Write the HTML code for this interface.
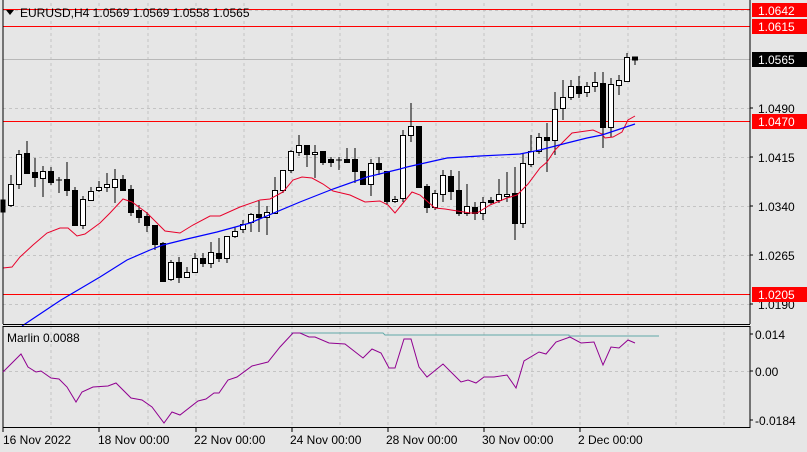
<!DOCTYPE html>
<html><head><meta charset="utf-8"><style>
html,body{margin:0;padding:0;background:#e6e6e6;}
svg{display:block;font-family:"Liberation Sans",sans-serif;}
</style></head><body>
<svg width="807" height="452" viewBox="0 0 807 452" xmlns="http://www.w3.org/2000/svg">
<rect width="807" height="452" fill="#e6e6e6"/>
<g stroke="#c4c4c4" stroke-width="1" stroke-dasharray="3,3">
<line x1="51" y1="3" x2="51" y2="324"/><line x1="99" y1="3" x2="99" y2="324"/><line x1="148" y1="3" x2="148" y2="324"/><line x1="196" y1="3" x2="196" y2="324"/><line x1="244" y1="3" x2="244" y2="324"/><line x1="292" y1="3" x2="292" y2="324"/><line x1="340" y1="3" x2="340" y2="324"/><line x1="388" y1="3" x2="388" y2="324"/><line x1="436" y1="3" x2="436" y2="324"/><line x1="484" y1="3" x2="484" y2="324"/><line x1="532" y1="3" x2="532" y2="324"/><line x1="580" y1="3" x2="580" y2="324"/><line x1="628" y1="3" x2="628" y2="324"/><line x1="676" y1="3" x2="676" y2="324"/><line x1="724" y1="3" x2="724" y2="324"/>
<line x1="3" y1="10.5" x2="750" y2="10.5"/><line x1="3" y1="108.5" x2="750" y2="108.5"/><line x1="3" y1="157.5" x2="750" y2="157.5"/><line x1="3" y1="206.5" x2="750" y2="206.5"/><line x1="3" y1="255.5" x2="750" y2="255.5"/><line x1="3" y1="304.5" x2="750" y2="304.5"/>
<line x1="51" y1="326" x2="51" y2="427"/><line x1="99" y1="326" x2="99" y2="427"/><line x1="148" y1="326" x2="148" y2="427"/><line x1="196" y1="326" x2="196" y2="427"/><line x1="244" y1="326" x2="244" y2="427"/><line x1="292" y1="326" x2="292" y2="427"/><line x1="340" y1="326" x2="340" y2="427"/><line x1="388" y1="326" x2="388" y2="427"/><line x1="436" y1="326" x2="436" y2="427"/><line x1="484" y1="326" x2="484" y2="427"/><line x1="532" y1="326" x2="532" y2="427"/><line x1="580" y1="326" x2="580" y2="427"/><line x1="628" y1="326" x2="628" y2="427"/><line x1="676" y1="326" x2="676" y2="427"/><line x1="724" y1="326" x2="724" y2="427"/>
<line x1="3" y1="371.5" x2="750" y2="371.5"/>
</g>
<line x1="3" y1="59.5" x2="750" y2="59.5" stroke="#b8b8b8"/>
<g stroke="#ff0000" stroke-width="1">
<line x1="3" y1="9.5" x2="750" y2="9.5"/><line x1="3" y1="26.5" x2="750" y2="26.5"/><line x1="3" y1="121.5" x2="750" y2="121.5"/><line x1="3" y1="294.5" x2="750" y2="294.5"/>
</g>
<g stroke="#000" stroke-width="1" shape-rendering="crispEdges">
<line x1="3" y1="175" x2="3" y2="212"/><rect x="1" y="200" width="4" height="12" fill="#000"/>
<line x1="11" y1="175" x2="11" y2="207"/><rect x="8.5" y="184.5" width="5" height="21" fill="#fff"/>
<line x1="19" y1="150" x2="19" y2="189"/><rect x="16.5" y="154.5" width="5" height="30" fill="#fff"/>
<line x1="27" y1="141" x2="27" y2="173"/><rect x="24.5" y="153.5" width="5" height="20" fill="#000"/>
<line x1="35" y1="158" x2="35" y2="187"/><rect x="32.5" y="172.5" width="5" height="5" fill="#000"/>
<line x1="43" y1="166" x2="43" y2="197"/><rect x="40.5" y="171.5" width="5" height="7" fill="#fff"/>
<line x1="51" y1="167" x2="51" y2="185"/><rect x="48.5" y="171.5" width="5" height="11" fill="#000"/>
<line x1="59" y1="177" x2="59" y2="193"/><line x1="56" y1="180" x2="62" y2="180"/>
<line x1="67" y1="162" x2="67" y2="196"/><rect x="64.5" y="179.5" width="5" height="11" fill="#000"/>
<line x1="75" y1="187" x2="75" y2="225"/><rect x="72.5" y="190.5" width="5" height="35" fill="#000"/>
<line x1="83" y1="196" x2="83" y2="229"/><rect x="80.5" y="199.5" width="5" height="26" fill="#fff"/>
<line x1="91" y1="187" x2="91" y2="200"/><rect x="88.5" y="191.5" width="5" height="9" fill="#fff"/>
<line x1="99" y1="181" x2="99" y2="192"/><rect x="96.5" y="187.5" width="5" height="3" fill="#fff"/>
<line x1="107" y1="173" x2="107" y2="192"/><rect x="104.5" y="184.5" width="5" height="3" fill="#fff"/>
<line x1="115" y1="169" x2="115" y2="203"/><rect x="112.5" y="179.5" width="5" height="8" fill="#fff"/>
<line x1="123" y1="175" x2="123" y2="190"/><rect x="120.5" y="179.5" width="5" height="11" fill="#000"/>
<line x1="131" y1="185" x2="131" y2="216"/><rect x="128.5" y="189.5" width="5" height="23" fill="#000"/>
<line x1="139" y1="205" x2="139" y2="223"/><rect x="136.5" y="210.5" width="5" height="7" fill="#000"/>
<line x1="147" y1="212" x2="147" y2="232"/><rect x="144.5" y="216.5" width="5" height="9" fill="#000"/>
<line x1="155" y1="225" x2="155" y2="250"/><rect x="152.5" y="225.5" width="5" height="19" fill="#000"/>
<line x1="163" y1="242" x2="163" y2="281"/><rect x="160.5" y="243.5" width="5" height="38" fill="#000"/>
<line x1="171" y1="260" x2="171" y2="281"/><rect x="168.5" y="262.5" width="5" height="17" fill="#fff"/>
<line x1="179" y1="257" x2="179" y2="283"/><rect x="176.5" y="262.5" width="5" height="15" fill="#000"/>
<line x1="187" y1="267" x2="187" y2="277"/><rect x="184.5" y="272.5" width="5" height="5" fill="#fff"/>
<line x1="195" y1="253" x2="195" y2="273"/><rect x="192.5" y="258.5" width="5" height="14" fill="#fff"/>
<line x1="203" y1="253" x2="203" y2="267"/><rect x="200.5" y="258.5" width="5" height="5" fill="#000"/>
<line x1="211" y1="242" x2="211" y2="268"/><rect x="208.5" y="252.5" width="5" height="11" fill="#fff"/>
<line x1="219" y1="238" x2="219" y2="262"/><rect x="216.5" y="253.5" width="5" height="5" fill="#000"/>
<line x1="227" y1="236" x2="227" y2="263"/><rect x="224.5" y="236.5" width="5" height="22" fill="#fff"/>
<line x1="235" y1="227" x2="235" y2="238"/><rect x="232.5" y="231.5" width="5" height="5" fill="#fff"/>
<line x1="243" y1="220" x2="243" y2="233"/><rect x="240.5" y="224.5" width="5" height="5" fill="#fff"/>
<line x1="251" y1="213" x2="251" y2="232"/><rect x="248.5" y="214.5" width="5" height="8" fill="#fff"/>
<line x1="259" y1="201" x2="259" y2="232"/><rect x="256.5" y="214.5" width="5" height="3" fill="#000"/>
<line x1="267" y1="206" x2="267" y2="235"/><rect x="264.5" y="212.5" width="5" height="5" fill="#fff"/>
<line x1="275" y1="177" x2="275" y2="213"/><rect x="272.5" y="190.5" width="5" height="23" fill="#fff"/>
<line x1="283" y1="170" x2="283" y2="193"/><rect x="280.5" y="170.5" width="5" height="20" fill="#fff"/>
<line x1="291" y1="150" x2="291" y2="173"/><rect x="288.5" y="151.5" width="5" height="19" fill="#fff"/>
<line x1="299" y1="135" x2="299" y2="156"/><rect x="296.5" y="145.5" width="5" height="7" fill="#fff"/>
<line x1="307" y1="145" x2="307" y2="167"/><rect x="304.5" y="145.5" width="5" height="9" fill="#000"/>
<line x1="315" y1="145" x2="315" y2="178"/><rect x="312.5" y="152.5" width="5" height="2" fill="#fff"/>
<line x1="323" y1="151" x2="323" y2="165"/><rect x="320.5" y="151.5" width="5" height="11" fill="#000"/>
<line x1="331" y1="157" x2="331" y2="167"/><rect x="328.5" y="159.5" width="5" height="3" fill="#000"/>
<line x1="339" y1="157" x2="339" y2="170"/><line x1="336" y1="160" x2="342" y2="160"/>
<line x1="347" y1="148" x2="347" y2="163"/><rect x="344.5" y="159.5" width="5" height="3" fill="#000"/>
<line x1="355" y1="148" x2="355" y2="183"/><rect x="352.5" y="159.5" width="5" height="12" fill="#000"/>
<line x1="363" y1="171" x2="363" y2="184"/><rect x="360.5" y="171.5" width="5" height="13" fill="#000"/>
<line x1="371" y1="159" x2="371" y2="196"/><rect x="368.5" y="163.5" width="5" height="21" fill="#fff"/>
<line x1="379" y1="157" x2="379" y2="175"/><rect x="376.5" y="163.5" width="5" height="6" fill="#000"/>
<line x1="387" y1="171" x2="387" y2="205"/><rect x="384.5" y="171.5" width="5" height="30" fill="#000"/>
<line x1="395" y1="196" x2="395" y2="203"/><rect x="392.5" y="199.5" width="5" height="2" fill="#fff"/>
<line x1="403" y1="130" x2="403" y2="202"/><rect x="400.5" y="135.5" width="5" height="63" fill="#fff"/>
<line x1="411" y1="103" x2="411" y2="142"/><rect x="408.5" y="126.5" width="5" height="9" fill="#fff"/>
<line x1="419" y1="126" x2="419" y2="188"/><rect x="416.5" y="126.5" width="5" height="61" fill="#000"/>
<line x1="427" y1="184" x2="427" y2="213"/><rect x="424.5" y="186.5" width="5" height="21" fill="#000"/>
<line x1="435" y1="190" x2="435" y2="210"/><rect x="432.5" y="193.5" width="5" height="14" fill="#fff"/>
<line x1="443" y1="170" x2="443" y2="202"/><rect x="440.5" y="175.5" width="5" height="19" fill="#fff"/>
<line x1="451" y1="170" x2="451" y2="200"/><rect x="448.5" y="176.5" width="5" height="15" fill="#000"/>
<line x1="459" y1="171" x2="459" y2="216"/><rect x="456.5" y="190.5" width="5" height="23" fill="#000"/>
<line x1="467" y1="184" x2="467" y2="216"/><rect x="464.5" y="206.5" width="5" height="7" fill="#fff"/>
<line x1="475" y1="202" x2="475" y2="220"/><rect x="472.5" y="207.5" width="5" height="6" fill="#000"/>
<line x1="483" y1="197" x2="483" y2="220"/><rect x="480.5" y="202.5" width="5" height="11" fill="#fff"/>
<line x1="491" y1="197" x2="491" y2="205"/><rect x="488.5" y="200.5" width="5" height="2" fill="#000"/>
<line x1="499" y1="179" x2="499" y2="203"/><rect x="496.5" y="194.5" width="5" height="6" fill="#fff"/>
<line x1="507" y1="172" x2="507" y2="202"/><rect x="504.5" y="194.5" width="5" height="2" fill="#fff"/>
<line x1="515" y1="167" x2="515" y2="240"/><rect x="512.5" y="193.5" width="5" height="30" fill="#000"/>
<line x1="523" y1="153" x2="523" y2="228"/><rect x="520.5" y="163.5" width="5" height="60" fill="#fff"/>
<line x1="531" y1="135" x2="531" y2="167"/><rect x="528.5" y="151.5" width="5" height="13" fill="#fff"/>
<line x1="539" y1="133" x2="539" y2="154"/><rect x="536.5" y="137.5" width="5" height="14" fill="#fff"/>
<line x1="547" y1="123" x2="547" y2="172"/><rect x="544.5" y="137.5" width="5" height="3" fill="#000"/>
<line x1="555" y1="92" x2="555" y2="155"/><rect x="552.5" y="109.5" width="5" height="31" fill="#fff"/>
<line x1="563" y1="80" x2="563" y2="120"/><rect x="560.5" y="97.5" width="5" height="11" fill="#fff"/>
<line x1="571" y1="80" x2="571" y2="100"/><rect x="568.5" y="86.5" width="5" height="11" fill="#fff"/>
<line x1="579" y1="76" x2="579" y2="98"/><rect x="576.5" y="86.5" width="5" height="7" fill="#000"/>
<line x1="587" y1="82" x2="587" y2="97"/><rect x="584.5" y="86.5" width="5" height="6" fill="#fff"/>
<line x1="595" y1="72" x2="595" y2="92"/><rect x="592.5" y="82.5" width="5" height="4" fill="#fff"/>
<line x1="603" y1="72" x2="603" y2="148"/><rect x="600.5" y="83.5" width="5" height="44" fill="#000"/>
<line x1="611" y1="78" x2="611" y2="137"/><rect x="608.5" y="84.5" width="5" height="43" fill="#fff"/>
<line x1="619" y1="75" x2="619" y2="95"/><rect x="616.5" y="80.5" width="5" height="5" fill="#fff"/>
<line x1="627" y1="53" x2="627" y2="81"/><rect x="624.5" y="57.5" width="5" height="24" fill="#fff"/>
<line x1="635" y1="57" x2="635" y2="65"/><rect x="632.5" y="57" width="5" height="3" fill="#000"/>
</g>
<polyline fill="none" stroke="#e8002a" stroke-width="1" points="3,268 12,267 20,257 33,245 47,233 60,228 68,228 77,236 85,234 100,223 110,213 123,199 132,202 147,213 157,223 165,231 180,233 193,225 210,216 220,216 240,207 260,200 270,199 283,192 293,180 302,177 312,178 323,184 333,191 350,195 365,202 380,201 388,205 395,213 412,192 420,195 435,208 445,209 470,213 477,213 490,205 507,198 517,195 528,184 540,168 547,162 555,150 562,143 572,133 593,130 602,134 605,138 613,137 622,132 628,120 635,116"/>
<polyline fill="none" stroke="#0000ff" stroke-width="1.2" points="22,326 25,324 61,300 78,290 100,277 127,260 150,250 163,245 187,239 217,232 250,223 300,202 333,189 367,177 400,169 407,167 447,158 480,156 520,154 540,150 567,143 587,138 602,135 620,129 635,124"/>
<!-- frames -->
<g fill="none" stroke="#000" stroke-width="1" shape-rendering="crispEdges">
<line x1="3" y1="0" x2="3" y2="324"/><line x1="750" y1="0" x2="750" y2="324"/><line x1="3" y1="324.5" x2="750" y2="324.5"/>
<rect x="3" y="326.5" width="747" height="101"/>
<line x1="3" y1="428" x2="3" y2="432"/><line x1="99" y1="428" x2="99" y2="432"/><line x1="196" y1="428" x2="196" y2="432"/><line x1="292" y1="428" x2="292" y2="432"/><line x1="388" y1="428" x2="388" y2="432"/><line x1="484" y1="428" x2="484" y2="432"/><line x1="580" y1="428" x2="580" y2="432"/>
<line x1="750" y1="108" x2="753" y2="108"/><line x1="750" y1="157" x2="753" y2="157"/><line x1="750" y1="206" x2="753" y2="206"/><line x1="750" y1="255" x2="753" y2="255"/><line x1="750" y1="304" x2="753" y2="304"/>
<line x1="750" y1="334" x2="753" y2="334"/><line x1="750" y1="371" x2="753" y2="371"/><line x1="750" y1="420" x2="753" y2="420"/>
</g>
<!-- indicator -->
<polyline fill="none" stroke="#60a8a8" stroke-width="1" points="291,333 383,333 385,335 569,335 569,336 659,336"/>
<polyline fill="none" stroke="#900090" stroke-width="1" points="3,372 21,354 28,367 36,372 41,371 51,378 59,379 67,387 76,402 82,392 93,387 108,386 116,383 131,398 142,400 152,407 164,423 172,412 180,415 198,401 206,399 214,393 219,393 228,380 237,377 252,366 268,362 280,347 293,333 300,333 309,337 315,337 329,343 345,344 363,358 372,349 381,353 389,368 395,368 404,339 411,339 419,367 427,377 443,364 461,382 468,380 476,383 484,377 494,377 507,375 516,388 524,361 539,352 546,354 556,342 570,337 581,343 594,342 603,365 611,347 619,348 628,340 635,343"/>
<text x="7" y="342" font-size="12" fill="#000">Marlin 0.0088</text>
<!-- header -->
<polygon points="6,10 14,10 10,15" fill="#000"/>
<text x="20" y="17" font-size="12" fill="#000">EURUSD,H4  1.0569 1.0569 1.0558 1.0565</text>
<!-- price labels -->
<g font-size="12" fill="#000">
<text x="758" y="113">1.0490</text><text x="758" y="162">1.0415</text><text x="758" y="211">1.0340</text><text x="758" y="260">1.0265</text><text x="758" y="309">1.0190</text>
<text x="755" y="339">0.014</text><text x="755" y="376">0.00</text><text x="755" y="425">-0.0184</text>
</g>
<rect x="752" y="3" width="55" height="14" fill="#ff0000"/><text x="758" y="15" font-size="12" fill="#fff">1.0642</text>
<rect x="752" y="19" width="55" height="15" fill="#ff0000"/><text x="758" y="31" font-size="12" fill="#fff">1.0615</text>
<rect x="752" y="52" width="55" height="15" fill="#000"/><text x="758" y="64" font-size="12" fill="#fff">1.0565</text>
<rect x="752" y="114" width="55" height="15" fill="#ff0000"/><text x="758" y="126" font-size="12" fill="#fff">1.0470</text>
<rect x="752" y="287" width="55" height="15" fill="#ff0000"/><text x="758" y="299" font-size="12" fill="#fff">1.0205</text>
<!-- time labels -->
<g font-size="12" fill="#000">
<text x="3" y="444">16 Nov 2022</text><text x="98" y="444">18 Nov 00:00</text><text x="194" y="444">22 Nov 00:00</text><text x="290" y="444">24 Nov 00:00</text><text x="386" y="444">28 Nov 00:00</text><text x="482" y="444">30 Nov 00:00</text><text x="578" y="444">2 Dec 00:00</text>
</g>
</svg>
</body></html>
